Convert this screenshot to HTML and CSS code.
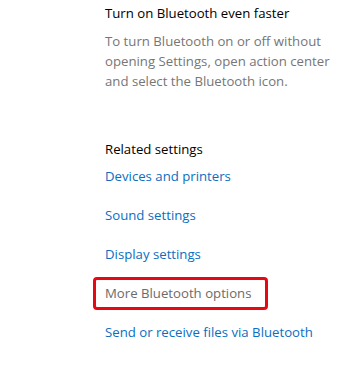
FILE: index.html
```html
<!DOCTYPE html>
<html>
<head>
<meta charset="utf-8">
<link rel="stylesheet" href="styles.css">
</head>
<body>
<main class="page">
  <section class="tip">
    <h2 class="title">Turn on Bluetooth even faster</h2>
    <p class="desc">To turn Bluetooth on or off without opening Settings, open action center and select the Bluetooth icon.</p>
  </section>
  <section class="related">
    <h2 class="title">Related settings</h2>
    <ul class="links">
      <li><a class="link">Devices and printers</a></li>
      <li><a class="link">Sound settings</a></li>
      <li><a class="link">Display settings</a></li>
      <li><a class="link grey highlighted">More Bluetooth options</a></li>
      <li><a class="link">Send or receive files via Bluetooth</a></li>
    </ul>
  </section>
</main>
</body>
</html>
```
FILE: styles.css
```css
html, body {
  margin: 0;
  padding: 0;
  background: #ffffff;
}
body {
  font-family: "Open Sans", "Noto Sans", sans-serif;
  font-size: 13.2px;
}
.page {
  padding: 3px 0 0 105px;
  width: 240px;
}
.title {
  margin: 0;
  font-size: 13.2px;
  font-weight: normal;
  color: #000;
  line-height: 20px;
}
.desc {
  margin: 8px 0 0;
  width: 228px;
  color: #767676;
  line-height: 20px;
}
.related {
  margin-top: 48px;
}
.links {
  list-style: none;
  margin: 7px 0 0;
  padding: 0;
  display: flex;
  flex-direction: column;
  gap: 19px;
}
.link {
  display: inline-block;
  color: #0a6ec2;
  line-height: 20px;
  white-space: nowrap;
}
.grey {
  color: #6b6b6b;
}
.highlighted {
  position: relative;
}
.highlighted::after {
  content: "";
  position: absolute;
  left: -12px;
  top: -6px;
  right: -17px;
  bottom: -7px;
  border: 3px solid #e50914;
  border-radius: 4px;
}
```
